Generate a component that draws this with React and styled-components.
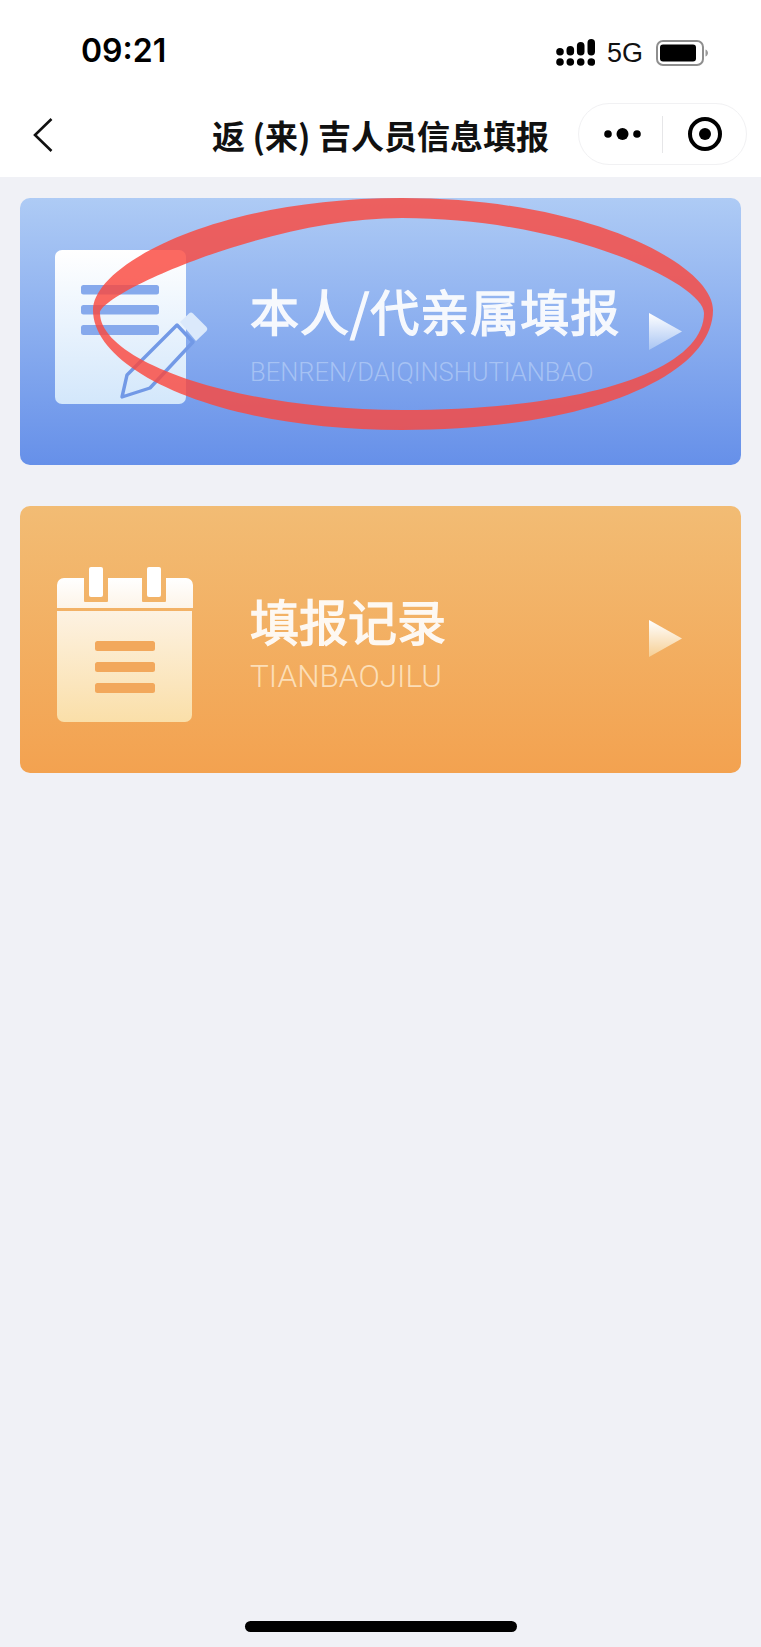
import React from 'react';
import styled, { createGlobalStyle } from 'styled-components';

const GlobalStyle = createGlobalStyle`
  html, body {
    margin: 0;
    padding: 0;
    background: #f0f1f6;
    font-family: "Noto Sans CJK SC", "Liberation Sans", sans-serif;
  }
`;

const Page = styled.div`
  width: 761px;
  height: 1647px;
  display: flex;
  flex-direction: column;
  background: #f0f1f6;
  overflow: hidden;
`;

const Header = styled.header`
  height: 177px;
  background: #fff;
  display: flex;
  flex-direction: column;
`;

const StatusBar = styled.div`
  height: 103px;
  box-sizing: border-box;
  padding: 31px 53px 0 81px;
  display: flex;
  justify-content: space-between;
  align-items: flex-start;
`;

const Time = styled.span`
  font-family: Inter, "Liberation Sans", sans-serif;
  font-size: 32px;
  font-weight: 600;
  line-height: 40px;
  color: #000;
`;

const StatusIcons = styled.div`
  display: flex;
  align-items: center;
  margin-top: 5px;
`;

const Signal = styled.div`
  display: flex;
  margin-top: 3px;
`;

const Network = styled.span`
  font-family: "Liberation Sans", sans-serif;
  font-size: 27px;
  line-height: 28px;
  color: #111;
  margin: 1px 13px 0 12px;
`;

const NavBar = styled.nav`
  height: 74px;
  display: grid;
  grid-template-columns: 1fr auto 1fr;
  align-items: flex-start;
`;

const BackButton = styled.div`
  padding: 14px 0 0 32px;
  display: flex;
`;

const Title = styled.h1`
  margin: 0;
  padding-top: 8px;
  font-size: 33px;
  font-weight: 700;
  line-height: 48px;
  color: #111;
  white-space: nowrap;
`;

const Capsule = styled.div`
  justify-self: end;
  box-sizing: border-box;
  width: 169px;
  height: 62px;
  margin-right: 14px;
  border: 1px solid #f1f1f3;
  border-radius: 31px;
  display: flex;
  align-items: center;
`;

const CapsuleSlot = styled.div`
  flex: 1;
  display: flex;
  justify-content: center;
  align-items: center;
`;

const MoreSlot = styled(CapsuleSlot)`
  svg {
    margin-left: 4px;
  }
`;

const CapsuleDivider = styled.div`
  width: 1px;
  height: 37px;
  background: #e6e6e8;
`;

const Content = styled.main`
  flex: 1;
  padding: 21px 20px 0;
  display: flex;
  flex-direction: column;
  gap: 41px;
`;

const tones = {
  blue: {
    bg: 'linear-gradient(180deg, #aecbf5 0%, #6690e9 100%)',
    sub: 'rgba(200, 220, 250, 0.55)',
    subSize: 25.5,
    subGap: 12,
    iconLeft: 35,
    iconTop: 52,
    textTop: 77,
    arrowTop: 115,
  },
  orange: {
    bg: 'linear-gradient(180deg, #f2bc74 0%, #f3a250 100%)',
    sub: 'rgba(255, 240, 215, 0.75)',
    subSize: 31.5,
    subGap: 7,
    iconLeft: 37,
    iconTop: 61,
    textTop: 79,
    arrowTop: 114,
  },
};

const Card = styled.div`
  position: relative;
  height: 267px;
  border-radius: 10px;
  background: ${(p) => tones[p.$tone].bg};
  display: grid;
  grid-template-columns: 230px 1fr auto;
  align-items: start;
  padding-right: 59px;
`;

const IconSlot = styled.div`
  padding-left: ${(p) => tones[p.$tone].iconLeft}px;
  padding-top: ${(p) => tones[p.$tone].iconTop}px;
  display: flex;
`;

const CardText = styled.div`
  padding-top: ${(p) => tones[p.$tone].textTop}px;
  display: flex;
  flex-direction: column;
`;

const CardTitle = styled.div`
  font-size: 49px;
  font-weight: 400;
  line-height: 70px;
  color: #fff;
  opacity: 0.92;
  -webkit-text-stroke: 1.4px #fff;
  letter-spacing: ${(p) => (p.$wide ? 1 : 0)}px;
  white-space: nowrap;
`;

const CardSub = styled.div`
  font-family: Roboto, "Liberation Sans", sans-serif;
  font-size: ${(p) => tones[p.$tone].subSize}px;
  font-weight: 300;
  line-height: 30px;
  margin-top: ${(p) => tones[p.$tone].subGap}px;
  color: ${(p) => tones[p.$tone].sub};
  white-space: nowrap;
`;

const Arrow = styled.div`
  margin-top: ${(p) => tones[p.$tone].arrowTop}px;
  display: flex;
`;

const Circled = styled.svg`
  position: absolute;
  left: 72px;
  top: 0;
  pointer-events: none;
`;

const HomeBar = styled.div`
  align-self: center;
  width: 272px;
  height: 11px;
  margin-bottom: 15px;
  border-radius: 6px;
  background: #000;
`;

const SignalIcon = () => (
  <svg width="40" height="30" viewBox="0 0 40 30">
    <circle cx="5" cy="23" r="3.800" fill="#000" />
    <circle cx="15.300" cy="23" r="3.800" fill="#000" />
    <circle cx="25.700" cy="23" r="3.800" fill="#000" />
    <circle cx="36.300" cy="23" r="3.800" fill="#000" />
    <rect x="1.200" y="9" width="7.600" height="7.500" rx="3.800" fill="#000" />
    <rect x="11.500" y="7" width="7.600" height="9.500" rx="3.800" fill="#000" />
    <rect x="21.900" y="3" width="7.600" height="13.500" rx="3.800" fill="#000" />
    <rect x="32.500" y="0" width="7.500" height="16.500" rx="3.700" fill="#000" />
  </svg>
);

const BatteryIcon = () => (
  <svg width="52" height="26" viewBox="0 0 52 26">
    <rect x="1" y="1" width="46" height="24" rx="6" fill="none" stroke="#8e8e8e" strokeWidth="2" />
    <rect x="4" y="4.500" width="36" height="17" rx="3" fill="#000" />
    <path d="M49.500 9.500c1.600.6 2.500 2 2.500 3.500s-.9 2.900-2.500 3.500z" fill="#9a9a9a" />
  </svg>
);

const BackIcon = () => (
  <svg width="22" height="36" viewBox="0 0 22 36">
    <path d="M19.500 2 3 18l16.500 16" fill="none" stroke="#111" strokeWidth="2.600" />
  </svg>
);

const MoreIcon = () => (
  <svg width="44" height="14" viewBox="0 0 44 14">
    <circle cx="7" cy="7" r="3.800" fill="#000" />
    <circle cx="21.500" cy="7" r="6" fill="#000" />
    <circle cx="36" cy="7" r="3.800" fill="#000" />
  </svg>
);

const TargetIcon = () => (
  <svg width="36" height="36" viewBox="0 0 36 36">
    <circle cx="18" cy="18" r="15" fill="none" stroke="#000" strokeWidth="4" />
    <circle cx="18" cy="18" r="6" fill="#000" />
  </svg>
);

const DocIcon = () => (
  <svg width="156" height="156" viewBox="0 0 156 156">
    <defs>
      <linearGradient id="docFill" x1="0" y1="0" x2="0" y2="1">
        <stop offset="0" stopColor="#ffffff" />
        <stop offset="1" stopColor="#d3e7fb" />
      </linearGradient>
    </defs>
    <rect x="0" y="0" width="131" height="154" rx="7" fill="url(#docFill)" />
    <rect x="26" y="35" width="78" height="9.500" rx="2.500" fill="#86a9ec" />
    <rect x="26" y="55" width="78" height="9.500" rx="2.500" fill="#86a9ec" />
    <rect x="26" y="75" width="78" height="10" rx="2.500" fill="#86a9ec" />
    <path d="M122 75 72 125l-5 22 28-9 43-46z" fill="none" stroke="#7299e6" strokeWidth="3.400" strokeLinejoin="round" />
    <path d="M125 72l9-8.500a3 3 0 0 1 4 0l13.500 13.500a3 3 0 0 1 0 4L141 91z" fill="#dbe9fb" />
  </svg>
);

const CalendarIcon = () => (
  <svg width="136" height="156" viewBox="0 0 136 156">
    <defs>
      <linearGradient id="calTop" x1="0" y1="0" x2="0" y2="1">
        <stop offset="0" stopColor="#ffffff" />
        <stop offset="1" stopColor="#fdf4e8" />
      </linearGradient>
      <linearGradient id="calBody" x1="0" y1="0" x2="0" y2="1">
        <stop offset="0" stopColor="#fdf2e2" />
        <stop offset="1" stopColor="#fadfa9" />
      </linearGradient>
    </defs>
    <path d="M7 11h20v23a1 1 0 0 0 1 1h22a1 1 0 0 0 1-1V11h34v23a1 1 0 0 0 1 1h22a1 1 0 0 0 1-1V11h20a7 7 0 0 1 7 7v23H0V18a7 7 0 0 1 7-7z" fill="url(#calTop)" />
    <rect x="32" y="0" width="14" height="30" rx="2" fill="#ffffff" />
    <rect x="90" y="0" width="14" height="30" rx="2" fill="#ffffff" />
    <path d="M0 44h135v104a7 7 0 0 1-7 7H7a7 7 0 0 1-7-7z" fill="url(#calBody)" />
    <rect x="38" y="74" width="60" height="10" rx="2.500" fill="#f2a85c" />
    <rect x="38" y="95" width="60" height="10" rx="2.500" fill="#f2a85c" />
    <rect x="38" y="116" width="60" height="10" rx="2.500" fill="#f2a85c" />
  </svg>
);

const PlayIcon = ({ id, end }) => (
  <svg width="33" height="37" viewBox="0 0 33 37">
    <defs>
      <linearGradient id={id} x1="0" y1="0" x2="0" y2="1">
        <stop offset="0" stopColor="#ffffff" />
        <stop offset="1" stopColor={end} />
      </linearGradient>
    </defs>
    <path d="M0 0 33 18.500 0 37z" fill={`url(#${id})`} />
  </svg>
);

// hand-drawn red ring, outer edge then inner edge
const ringPath =
  'M1 112C1 67 124 0 310 0C497 0 621 67 621 112C621 178 497 232 310 232C125 232 1 172 1 112z' +
  'M8 115C8 96 174 20 310 20C476 20 612 86 612 115C612 173 491 212 310 212C144 212 8 163 8 115z';

const App = () => (
  <Page>
    <GlobalStyle />
    <Header>
      <StatusBar>
        <Time>09:21</Time>
        <StatusIcons>
          <Signal>
            <SignalIcon />
          </Signal>
          <Network>5G</Network>
          <BatteryIcon />
        </StatusIcons>
      </StatusBar>
      <NavBar>
        <BackButton>
          <BackIcon />
        </BackButton>
        <Title>返 (来) 吉人员信息填报</Title>
        <Capsule>
          <MoreSlot>
            <MoreIcon />
          </MoreSlot>
          <CapsuleDivider />
          <CapsuleSlot>
            <TargetIcon />
          </CapsuleSlot>
        </Capsule>
      </NavBar>
    </Header>
    <Content>
      <Card $tone="blue">
        <IconSlot $tone="blue">
          <DocIcon />
        </IconSlot>
        <CardText $tone="blue">
          <CardTitle $wide>本人/代亲属填报</CardTitle>
          <CardSub $tone="blue">BENREN/DAIQINSHUTIANBAO</CardSub>
        </CardText>
        <Arrow $tone="blue">
          <PlayIcon id="playBlue" end="#a9c5f3" />
        </Arrow>
        <Circled width="625" height="235" viewBox="0 0 625 235">
          <path fillRule="evenodd" fill="rgba(250, 72, 62, 0.82)" d={ringPath} />
        </Circled>
      </Card>
      <Card $tone="orange">
        <IconSlot $tone="orange">
          <CalendarIcon />
        </IconSlot>
        <CardText $tone="orange">
          <CardTitle>填报记录</CardTitle>
          <CardSub $tone="orange">TIANBAOJILU</CardSub>
        </CardText>
        <Arrow $tone="orange">
          <PlayIcon id="playOrange" end="#f6cf94" />
        </Arrow>
      </Card>
    </Content>
    <HomeBar />
  </Page>
);

export default App;
